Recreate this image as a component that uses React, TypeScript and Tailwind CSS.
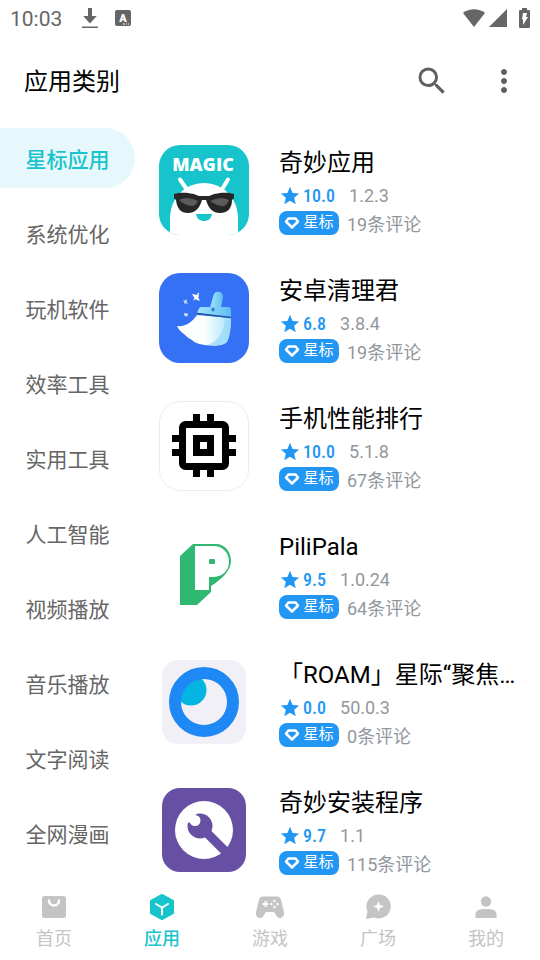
import React, { useState } from 'react';
import { MdMoreVert, MdSearch, MdStar } from 'react-icons/md';

interface AppItem {
  id: string;
  name: string;
  score: string;
  version: string;
  comments: number;
  icon: React.ReactNode;
}

const categories = [
  '星标应用',
  '系统优化',
  '玩机软件',
  '效率工具',
  '实用工具',
  '人工智能',
  '视频播放',
  '音乐播放',
  '文字阅读',
  '全网漫画',
];

function MagicIcon() {
  return (
    <svg viewBox="0 0 90 90" className="size-full" aria-hidden="true">
      <defs>
        <clipPath id="magic-tile">
          <rect width="90" height="90" rx="21" />
        </clipPath>
      </defs>
      <g clipPath="url(#magic-tile)">
        <rect width="90" height="90" fill="#17c4cc" />
        <text x="44" y="26" textAnchor="middle" fontSize="18" className="fill-white font-['Open_Sans',sans-serif] font-extrabold">
          MAGIC
        </text>
        <path d="M21 34.500L29 46M69 34.500L62 46" stroke="#fff" strokeWidth="4" strokeLinecap="round" />
        <path d="M11 90V74C11 52 27 38 45 38S79 52 79 74V90Z" fill="#fff" />
        {/* 墨镜 */}
        <path d="M15 49C25 46 36 49 40 51H50C54 49 65 46 75 49V53L73 55C73 64 68 68 61 68C53 68 49 62 47 55H43C41 62 37 68 29 68C22 68 18 64 17 55L15 53Z" fill="#262626" />
        <path d="M20 55C25 52 34 53 39 56C37 60 35 61 33 61C29 61 23 58 20 55ZM51 56C57 53 64 52 70 55C69 58 67 60 65 61C60 61 55 59 51 56Z" fill="#5c5c5c" />
        <path d="M37 69H53C52 74 49 76 45 76S38 74 37 69Z" fill="#17c4cc" />
      </g>
    </svg>
  );
}

function CleanerIcon() {
  return (
    <svg viewBox="0 0 90 90" className="size-full" aria-hidden="true">
      <defs>
        <linearGradient id="brush-handle" x1="0" x2="1">
          <stop offset="0" stopColor="#a5e4fd" />
          <stop offset="1" stopColor="#5dbdf3" />
        </linearGradient>
        <linearGradient id="brush-hair" x1="0" x2="1">
          <stop offset="0.500" stopColor="#fdffff" />
          <stop offset="1" stopColor="#a8e2fb" />
        </linearGradient>
      </defs>
      <rect width="90" height="90" rx="21" fill="#3571f5" />
      <path d="M51 35L54.500 22C56 17 64 18 64 24L62 35Z" fill="url(#brush-handle)" />
      <path d="M42 34H69Q72 34 72 37V45L38 40L40 35.500Q41 34 42 34Z" fill="url(#brush-handle)" />
      <path d="M54 34L56 36.500L54 39L52 36.500Z" fill="#2c7fd8" />
      <path d="M38 42L72 45C72 55 71 63 68 69C63 74 50 73 43 71.500C38 70.500 35 69 33 67C29 65 27 63 25 61C22 59 20 57 18 53C27 54 33 49 38 42Z" fill="url(#brush-hair)" />
      <path d="M66 45C65 58 61 67 49 72C60 74 67 71 69 65C71 59 72 52 72 45Z" fill="#94d9fa" opacity="0.700" />
      <path d="M38 40.500L72 44.500" stroke="#1d569e" strokeWidth="1.500" />
      <path d="M40 19L39.500 24L34 28L36 24Z M33 21L38 22L41 28L36 26Z" fill="#fff" />
      <path d="M28 26L27.500 29L25 31L25.500 28ZM24 27L27 28L29 31L26 30ZM25 40L29 40.500L28.500 43.500L25.500 43Z" fill="#cfe0ff" />
    </svg>
  );
}

function ChipIcon() {
  return (
    <svg viewBox="0 0 90 90" className="size-full" aria-hidden="true">
      <rect x="0.500" y="0.500" width="89" height="89" rx="21" fill="#fff" stroke="#ececec" />
      <rect x="23.500" y="23.500" width="43" height="42" rx="3" fill="none" stroke="#000" strokeWidth="7" />
      <rect x="37.500" y="37.500" width="14" height="14" fill="none" stroke="#000" strokeWidth="7" />
      {/* 芯片引脚 */}
      <path d="M37.500 13V22M51.500 13V22M37.500 67V76M51.500 67V76M13 37.500H22M13 51.500H22M68 37.500H77M68 51.500H77" stroke="#000" strokeWidth="7" />
    </svg>
  );
}

function PiliIcon() {
  return (
    <svg viewBox="0 0 90 90" className="size-full" aria-hidden="true">
      <path d="M34 15H57C66 15 72 23 72 32C72 40 65 49 52 57V63L38 76H21V27Z" fill="#2eb872" />
      <rect x="36" y="17" width="14" height="44" fill="#fff" />
      <rect x="40" y="17" width="30" height="31" rx="15" fill="#fff" />
      <rect x="40" y="17" width="16" height="31" fill="#fff" />
      <rect x="50" y="30" width="6" height="5" rx="1" fill="#2eb872" />
    </svg>
  );
}

function RoamIcon() {
  return (
    <svg viewBox="0 0 90 90" className="size-full" aria-hidden="true">
      <defs>
        <clipPath id="roam-eye">
          <circle cx="45" cy="45" r="24" />
        </clipPath>
      </defs>
      <rect x="3" y="3" width="84" height="84" rx="16" fill="#f1f0f6" />
      <circle cx="32" cy="33" r="15.500" fill="#04b5e2" clipPath="url(#roam-eye)" />
      <circle cx="45" cy="45" r="29" fill="none" stroke="#1e88f5" strokeWidth="12" />
    </svg>
  );
}

function InstallerIcon() {
  return (
    <svg viewBox="0 0 90 90" className="size-full" aria-hidden="true">
      <rect x="3" y="3" width="84" height="84" rx="18" fill="#6750a4" />
      <circle cx="45" cy="45" r="29" fill="#fff" />
      <path d="M47 47L68 68" stroke="#6750a4" strokeWidth="9" />
      <circle cx="41" cy="41" r="12.500" fill="#6750a4" />
      <circle cx="36" cy="35.500" r="5.500" fill="#fff" />
      <path d="M24 37L29 38L36 35L37 29L32 24Z" fill="#fff" />
    </svg>
  );
}

const apps: AppItem[] = [
  { id: 'magic', name: '奇妙应用', score: '10.0', version: '1.2.3', comments: 19, icon: <MagicIcon /> },
  { id: 'cleaner', name: '安卓清理君', score: '6.8', version: '3.8.4', comments: 19, icon: <CleanerIcon /> },
  { id: 'rank', name: '手机性能排行', score: '10.0', version: '5.1.8', comments: 67, icon: <ChipIcon /> },
  { id: 'pili', name: 'PiliPala', score: '9.5', version: '1.0.24', comments: 64, icon: <PiliIcon /> },
  { id: 'roam', name: '「ROAM」星际“聚焦…', score: '0.0', version: '50.0.3', comments: 0, icon: <RoamIcon /> },
  { id: 'installer', name: '奇妙安装程序', score: '9.7', version: '1.1', comments: 115, icon: <InstallerIcon /> },
];

// 底部导航
const tabs = [
  {
    label: '首页',
    icon: (
      <>
        <rect x="2" y="4" width="24" height="22" rx="2.500" fill="currentColor" />
        <path d="M9 8.500C9 15 19 15 19 8.500" fill="none" stroke="#fff" strokeWidth="2.500" strokeLinecap="round" />
      </>
    ),
  },
  {
    label: '应用',
    icon: (
      <>
        <path d="M14 3L25 9V21L14 27L3 21V9Z" fill="currentColor" stroke="currentColor" strokeWidth="2" strokeLinejoin="round" />
        <path d="M8 12L14 15.500L20 12M14 15.500V22.500" fill="none" stroke="#fff" strokeWidth="2" strokeLinecap="round" />
      </>
    ),
  },
  {
    label: '游戏',
    icon: (
      <>
        <path d="M7 4.500H21C23.500 4.500 24.500 6 25 8L28 20C29 25 24 28 21 24.500L18 20H10L7 24.500C4 28 -1 25 0 20L3 8C3.500 6 4.500 4.500 7 4.500Z" fill="currentColor" />
        <path d="M9.500 9V15M6.500 12H12.500" stroke="#fff" strokeWidth="2" />
        <g fill="#fff">
          <circle cx="18.500" cy="9" r="1.200" />
          <circle cx="18.500" cy="15" r="1.200" />
          <circle cx="15.500" cy="12" r="1.200" />
          <circle cx="21.500" cy="12" r="1.200" />
        </g>
      </>
    ),
  },
  {
    label: '广场',
    icon: (
      <>
        <path d="M14.500 2.500A12 12 0 1 1 10 25.500L2 27L3.500 19.500A12 12 0 0 1 14.500 2.500Z" fill="currentColor" />
        <path d="M14.500 9L16 13L20 14.500L16 16L14.500 20L13 16L9 14.500L13 13Z" fill="#fff" />
      </>
    ),
  },
  {
    label: '我的',
    icon: (
      <>
        <circle cx="14" cy="9.500" r="5.200" fill="currentColor" />
        <path d="M3.500 26V22C3.500 18 8 17 14 17S24.500 18 24.500 22V26Z" fill="currentColor" />
      </>
    ),
  },
];

function StatusBar() {
  return (
    <div className="flex h-9 shrink-0 items-center px-2.5 text-[#666]">
      <span className="pt-0.5 text-[21px] leading-8">10:03</span>
      <svg viewBox="0 0 16 22" className="ml-5 h-[22px] w-4" aria-hidden="true">
        <path d="M8 1V14M3.500 10L8 15L12.500 10Z" fill="currentColor" stroke="currentColor" strokeWidth="2" />
        <path d="M6 1H10V10H6ZM0 19.500H16V21H0Z" fill="currentColor" />
      </svg>
      <svg viewBox="0 0 16 16" className="ml-[17px] size-4" aria-hidden="true">
        <rect width="16" height="16" rx="2" fill="currentColor" />
        <text x="8" y="12" textAnchor="middle" fontSize="11" className="fill-white font-['Roboto',sans-serif] font-black">
          A
        </text>
        <path d="M8 14H10M11 14H12M13 14H14" stroke="#fff" />
      </svg>
      <svg viewBox="0 0 22 18" className="ml-auto h-[18px] w-[22px]" aria-hidden="true">
        <path d="M0 4C6 -1 16 -1 22 4L11 18Z" fill="currentColor" />
      </svg>
      <svg viewBox="0 0 18 18" className="ml-1 size-[18px]" aria-hidden="true">
        <path d="M18 0V18H0Z" fill="currentColor" />
      </svg>
      <svg viewBox="0 0 11 20" className="ml-3 h-5 w-[11px]" aria-hidden="true">
        <path d="M3 0H8V2H10Q11 2 11 3V19Q11 20 10 20H1Q0 20 0 19V3Q0 2 1 2H3Z" fill="currentColor" />
        <path d="M4 5H8L7 9H9L4 17V11.500H3Z" fill="#fff" />
      </svg>
    </div>
  );
}

function AppRow({ app }: { app: AppItem }) {
  return (
    <li className="flex h-32 shrink-0 items-center gap-[30px]">
      <div className="size-[90px] shrink-0">{app.icon}</div>
      <div className="min-w-0 flex-1">
        <h2 className="truncate text-2xl leading-9 text-black">{app.name}</h2>
        <div className="flex h-[30px] items-center text-lg text-[#92979e]">
          <MdStar className="size-[22px] text-[#2196f3]" />
          <span className="ml-0.5 font-['Roboto_Condensed','Liberation_Sans_Narrow','Liberation_Sans',sans-serif] font-medium text-[#2196f3]">
            {app.score}
          </span>
          <span className="ml-3.5">{app.version}</span>
        </div>
        <div className="flex h-6 items-center gap-2 text-lg text-[#92979e]">
          <span className="flex h-6 w-[60px] items-center justify-center gap-[3px] rounded-lg bg-[#2196f3] text-[15px] text-white">
            <svg viewBox="0 0 16 14" className="h-3.5 w-4" aria-hidden="true">
              <path d="M4.500 2.500H11.500L14 5.500L8 11.500L2 5.500Z" fill="none" stroke="currentColor" strokeWidth="2.500" strokeLinejoin="round" />
            </svg>
            星标
          </span>
          <span className="pt-1">{app.comments}条评论</span>
        </div>
      </div>
    </li>
  );
}

export default function App() {
  const [category, setCategory] = useState('星标应用');
  const [tab, setTab] = useState('应用');

  return (
    <div className="flex h-screen flex-col bg-white font-['Roboto','Noto_Sans_CJK_SC',sans-serif]">
      <StatusBar />

      <header className="flex h-[90px] shrink-0 items-center gap-9 pr-[18px] pl-6 text-[#5f5f5f]">
        <h1 className="mr-auto pt-0.5 text-2xl text-black">应用类别</h1>
        <button type="button" aria-label="搜索">
          <MdSearch className="size-9" />
        </button>
        <button type="button" aria-label="更多">
          <MdMoreVert className="size-9" />
        </button>
      </header>

      <div className="flex min-h-0 flex-1">
        {/* 左侧分类 */}
        <aside className="flex w-1/4 flex-col gap-[15px] overflow-y-auto pt-0.5 [scrollbar-width:none]">
          {categories.map((item) => (
            <button
              key={item}
              type="button"
              onClick={() => setCategory(item)}
              className={
                item === category
                  ? 'h-[60px] shrink-0 rounded-r-full bg-[#e6f8fb] pt-1.5 text-[21px] font-medium text-[#17c4cc]'
                  : 'h-[60px] shrink-0 pt-1.5 text-[21px] text-[#666]'
              }
            >
              {item}
            </button>
          ))}
        </aside>

        {/* 应用列表 */}
        <ul className="flex min-w-0 flex-1 flex-col overflow-y-auto pr-5 pl-6 [scrollbar-width:none]">
          {apps.map((app) => (
            <AppRow key={app.id} app={app} />
          ))}
        </ul>
      </div>

      <nav className="grid h-19 shrink-0 grid-cols-5 bg-white">
        {tabs.map(({ label, icon }) => (
          <button
            key={label}
            type="button"
            onClick={() => setTab(label)}
            className={
              label === tab
                ? 'flex flex-col items-center justify-center gap-[5px] pt-px text-lg leading-7 font-medium text-[#17c4cc]'
                : 'flex flex-col items-center justify-center gap-[5px] pt-px text-lg leading-7 text-[#c4c4c4]'
            }
          >
            <svg viewBox="0 0 28 28" className="size-7" aria-hidden="true">
              {icon}
            </svg>
            {label}
          </button>
        ))}
      </nav>
    </div>
  );
}
